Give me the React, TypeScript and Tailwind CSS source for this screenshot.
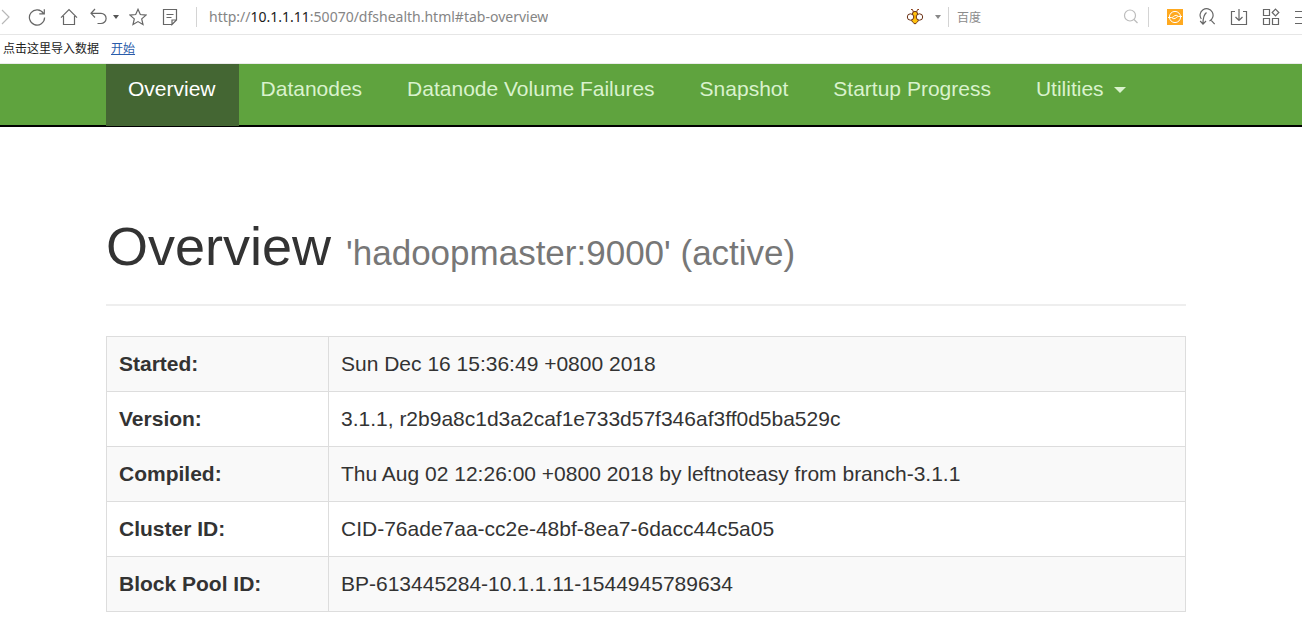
import type { ReactNode } from "react";

const summary = [
  { label: "Started:", value: "Sun Dec 16 15:36:49 +0800 2018" },
  { label: "Version:", value: "3.1.1, r2b9a8c1d3a2caf1e733d57f346af3ff0d5ba529c" },
  { label: "Compiled:", value: "Thu Aug 02 12:26:00 +0800 2018 by leftnoteasy from branch-3.1.1" },
  { label: "Cluster ID:", value: "CID-76ade7aa-cc2e-48bf-8ea7-6dacc44c5a05" },
  { label: "Block Pool ID:", value: "BP-613445284-10.1.1.11-1544945789634" },
];

const tabs = ["Datanodes", "Datanode Volume Failures", "Snapshot", "Startup Progress"];

function ToolButton({ label, children, className = "w-8" }: { label: string; children: ReactNode; className?: string }) {
  return (
    <button type="button" aria-label={label} className={`flex h-8 shrink-0 items-center justify-center ${className}`}>
      {children}
    </button>
  );
}

function Icon({ children, color = "#666666" }: { children: ReactNode; color?: string }) {
  return (
    <svg width="18" height="18" viewBox="0 0 18 18" fill="none" stroke={color} strokeWidth="1.2" className="shrink-0" aria-hidden="true">
      {children}
    </svg>
  );
}

function Caret({ color }: { color: string }) {
  return (
    <svg width="6" height="4" viewBox="0 0 6 4" fill={color} aria-hidden="true">
      <path d="M0 0h6L3 4z" />
    </svg>
  );
}

function Divider() {
  return <span className="h-5 w-px shrink-0 bg-[#d4d4d4]" />;
}

function Bee() {
  return (
    <svg width="18" height="18" viewBox="0 0 18 18" aria-hidden="true">
      <path d="M7.500 4.500 6.500 1.500H5M10.500 4.500l1-3H13" fill="none" stroke="#8a3d16" />
      <g stroke="#6b3216" strokeWidth="1">
        <circle cx="9" cy="6" r="2.600" fill="#ffc20e" />
        <path d="M9 8.500 5.500 11.500c0 2 1.500 3 3.500 4.500 2-1.500 3.500-2.500 3.500-4.500z" fill="#ffc20e" />
        <circle cx="4.500" cy="9" r="3.200" fill="#fff" />
        <circle cx="13.500" cy="9" r="3.200" fill="#fff" />
      </g>
      <path d="M9 7 7.500 9 9 11l1.500-2z" fill="#f0a500" />
    </svg>
  );
}

function BrowserBar() {
  return (
    <header className="font-['Noto_Sans','Noto_Sans_CJK_SC',sans-serif]">
      <div className="flex h-[35px] items-center overflow-hidden border-b border-[#e6e6e6] bg-white">
        <ToolButton label="Forward" className="w-[21px] pr-3">
          <Icon color="#b8b8b8">
            <path d="m6 2 7 7-7 7" />
          </Icon>
        </ToolButton>
        <ToolButton label="Reload">
          <Icon>
            <path d="M15.500 5.500A7.600 7.600 0 1 0 16.600 9.500M16.300 1.200v4.600h-5" />
          </Icon>
        </ToolButton>
        <ToolButton label="Home">
          <Icon>
            <path d="M1 9.700 9 1.500l8 8.200M3.500 8v8.500h11V8" />
          </Icon>
        </ToolButton>
        <ToolButton label="Undo" className="w-[25px]">
          <Icon>
            <path d="M6 1 2 5.300l4 4.200M2 5.300h10a5 5 0 0 1 0 10.200H8.500" />
          </Icon>
        </ToolButton>
        <ToolButton label="Recently closed" className="w-3">
          <Caret color="#555555" />
        </ToolButton>
        <ToolButton label="Add to favourites">
          <Icon>
            <path d="m9 1.300 2.300 5.200 5.700.6-4.300 3.800 1.300 5.600L9 13.600l-5 2.900 1.300-5.600L1 7.100l5.700-.6z" />
          </Icon>
        </ToolButton>
        <ToolButton label="Notes">
          <Icon>
            <path d="M10.500 16.500h-8v-15h13v10.500l-4.500 4.500V12h4.500M5.500 6.500h7M5.500 9.500h5" />
          </Icon>
        </ToolButton>
        <div className="ml-[10px] flex min-w-0 flex-1 items-center">
          <Divider />
          <a href="#tab-overview" className="ml-3 truncate text-sm text-[#858585]">
            http://<span className="text-[#1a1a1a]">10.1.1.11</span>:50070/dfshealth.html#tab-overview
          </a>
        </div>
        <ToolButton label="Extension">
          <Bee />
        </ToolButton>
        <ToolButton label="Search engine" className="w-[14px]">
          <Caret color="#888888" />
        </ToolButton>
        <div className="ml-[3px] flex items-center">
          <Divider />
          <input
            aria-label="百度"
            placeholder="百度"
            className="ml-2 h-6 w-[165px] text-xs outline-none placeholder:text-[#8c8c8c]"
          />
          <ToolButton label="Search" className="w-[18px]">
            <Icon color="#bcbcbc">
              <circle cx="8" cy="7.500" r="5.500" />
              <path d="m12 11.500 3.500 3.500" />
            </Icon>
          </ToolButton>
          <span className="w-2" />
          <Divider />
        </div>
        <div className="ml-[10px] flex w-[143px] shrink-0 overflow-hidden">
          <ToolButton label="Sync">
            <svg width="16" height="16" viewBox="0 0 16 16" fill="none" stroke="#fff" aria-hidden="true">
              <path fill="#ffa91f" stroke="none" d="M0 0h16v16H0z" />
              <circle cx="8" cy="8" r="5.600" />
              <path d="M1 8.500h3.500C6.500 8.500 7 6.300 9 6.300c1.400 0 2 .7 2 1.200M15 7.500h-3.500C9.500 7.500 9 9.700 7 9.700c-1.400 0-2-.7-2-1.200" />
            </svg>
          </ToolButton>
          <ToolButton label="Translate">
            <Icon>
              <path d="M3.300 11A6.500 6.500 0 1 1 11.500 13M12.500 11.700l4.200 4.500M8.500 4.500C6 6.500 5 9 5 15.500M2.200 13 5 16.200 8 13" />
            </Icon>
          </ToolButton>
          <ToolButton label="Downloads">
            <Icon>
              <path d="M5 3.500H1.500v13h15v-13H13M9 1v11M5.500 9 9 12.500 12.500 9" />
            </Icon>
          </ToolButton>
          <ToolButton label="Extensions">
            <Icon>
              <path d="M1.500 1.500h6v6h-6zM1.500 10.500h6v6h-6zM10.500 10.500h6v6h-6zM13.500 1.200l3.300 3.300-3.300 3.300-3.300-3.300z" />
            </Icon>
          </ToolButton>
          <ToolButton label="Menu">
            <svg width="16" height="18" viewBox="0 0 16 18" stroke="#666" strokeWidth="1" aria-hidden="true">
              <path d="M0 3.500h16M0 9.500h16M0 15.500h16" />
            </svg>
          </ToolButton>
        </div>
      </div>
      <div className="flex h-[29px] items-center gap-3 border-b border-[#ebebeb] bg-white pl-[3px] text-xs text-[#222]">
        <span>点击这里导入数据</span>
        <a href="#start" className="text-[#2a5caa] underline">
          开始
        </a>
      </div>
    </header>
  );
}

export default function App() {
  return (
    <div className="min-h-screen bg-white font-['Liberation_Sans',Arial,sans-serif] text-[21px] text-[#333]">
      <BrowserBar />
      <nav className="flex h-[63px] border-b-2 border-black bg-[#5fa33e] pl-[106px] leading-[30px] text-[#d9f2cd]">
        <a href="#tab-overview" aria-current="page" className="h-[62px] bg-[#446633] pt-[10px] pr-[23px] pl-[22px] text-white">
          Overview
        </a>
        {tabs.map((tab) => (
          <a key={tab} href="#" className="pt-[10px] pr-[23px] pl-[22px] whitespace-nowrap">
            {tab}
          </a>
        ))}
        <button type="button" className="flex items-start gap-[10px] pt-[10px] pr-[23px] pl-[22px]">
          Utilities
          <svg width="12" height="30" viewBox="0 0 12 30" fill="currentColor" aria-hidden="true">
            <path d="M0 13h12l-6 6z" />
          </svg>
        </button>
      </nav>
      <main className="pr-[116px] pb-[30px] pl-[106px]">
        <h1 className="border-b-2 border-[#eee] pt-[89px] pb-[28px] text-[54px] leading-[60px]">
          Overview <small className="text-[35px] leading-none text-[#777]">'hadoopmaster:9000' (active)</small>
        </h1>
        <table className="mt-[30px] w-full border-collapse text-left leading-[30px]">
          <tbody>
            {summary.map((row) => (
              <tr key={row.label} className="odd:bg-[#f9f9f9]">
                <th scope="row" className="w-[222px] border border-[#ddd] px-3 py-3 font-bold">
                  {row.label}
                </th>
                <td className="border border-[#ddd] px-3 py-3">{row.value}</td>
              </tr>
            ))}
          </tbody>
        </table>
      </main>
    </div>
  );
}
